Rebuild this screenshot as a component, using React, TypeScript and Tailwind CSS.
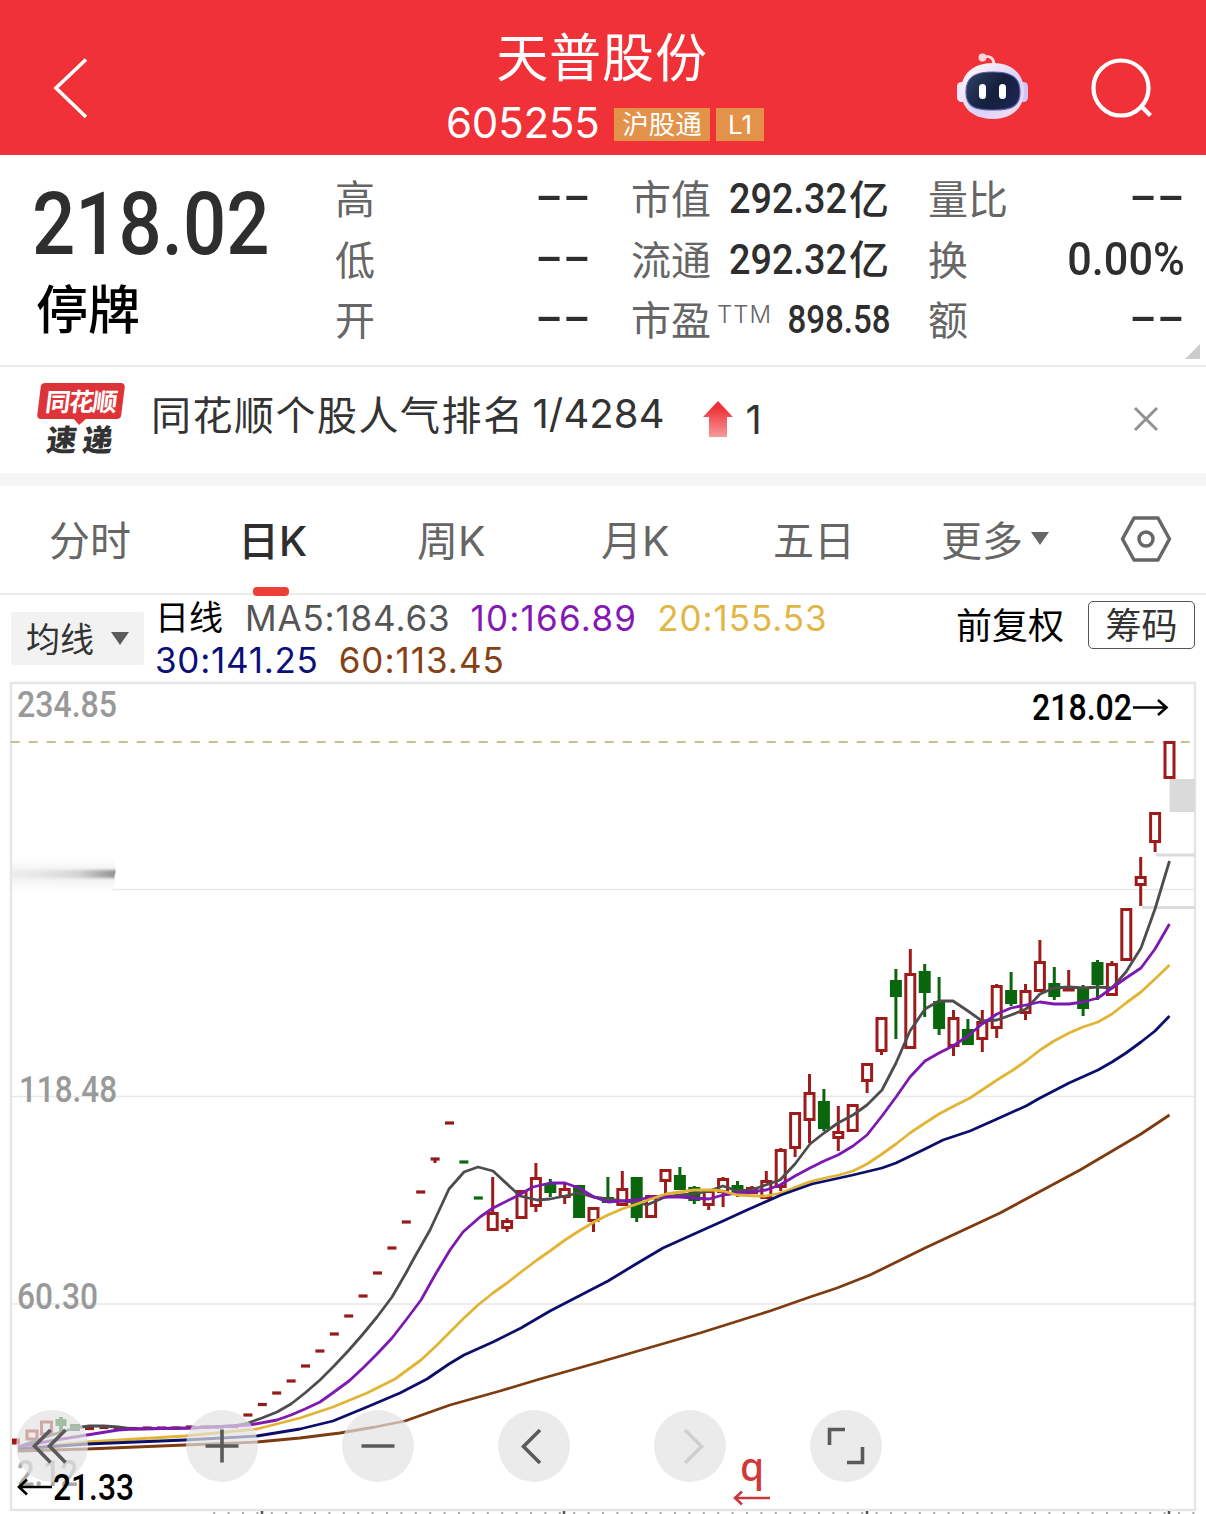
import clsx from "clsx";
import type { ReactNode } from "react";

const STEP = 14.4;
const LAST_X = 1169.5;

type Candle = [kind: "r" | "g", high: number, top: number, bottom: number, low: number];

/** Newest candle first, values are chart pixel rows. */
const candles: Candle[] = [
  ["r", 741, 741, 779, 779],
  ["r", 812, 812, 843, 852],
  ["r", 857, 876, 886, 906],
  ["r", 908, 908, 961, 961],
  ["r", 961, 963, 996, 996],
  ["g", 960, 962, 985, 1000],
  ["g", 985, 987, 1009, 1016],
  ["r", 970, 988, 991, 991],
  ["g", 967, 983, 997, 1000],
  ["r", 940, 961, 992, 992],
  ["r", 984, 990, 1014, 1020],
  ["g", 972, 990, 1004, 1006],
  ["r", 984, 985, 1029, 1038],
  ["r", 1010, 1021, 1040, 1052],
  ["g", 1019, 1029, 1045, 1045],
  ["r", 1010, 1017, 1047, 1056],
  ["g", 977, 1001, 1029, 1035],
  ["g", 964, 971, 993, 1017],
  ["r", 949, 973, 1049, 1049],
  ["g", 969, 980, 997, 1039],
  ["r", 1017, 1017, 1052, 1055],
  ["r", 1063, 1063, 1082, 1093],
  ["r", 1104, 1104, 1132, 1132],
  ["r", 1106, 1131, 1139, 1151],
  ["g", 1089, 1101, 1129, 1131],
  ["r", 1074, 1092, 1121, 1143],
  ["r", 1112, 1112, 1149, 1157],
  ["r", 1148, 1149, 1188, 1191],
  ["r", 1171, 1180, 1199, 1199],
  ["r", 1186, 1187, 1194, 1194],
  ["g", 1181, 1185, 1192, 1197],
  ["r", 1177, 1178, 1193, 1207],
  ["r", 1190, 1190, 1206, 1210],
  ["g", 1186, 1187, 1201, 1204],
  ["g", 1167, 1175, 1190, 1190],
  ["r", 1169, 1169, 1182, 1197],
  ["r", 1195, 1195, 1218, 1218],
  ["g", 1177, 1177, 1218, 1222],
  ["r", 1171, 1188, 1206, 1206],
  ["g", 1177, 1197, 1203, 1203],
  ["r", 1207, 1207, 1222, 1232],
  ["g", 1185, 1185, 1218, 1218],
  ["r", 1183, 1188, 1198, 1204],
  ["g", 1179, 1183, 1193, 1197],
  ["r", 1163, 1177, 1207, 1212],
  ["r", 1190, 1190, 1219, 1219],
  ["r", 1218, 1220, 1229, 1232],
  ["r", 1177, 1212, 1231, 1231],
];

/** One-price limit days, right to left. */
const limitDays = [
  1198, 1162, 1123, 1159, 1192, 1222, 1248, 1273, 1296, 1316, 1334, 1351, 1366, 1381, 1393, 1404.5, 1415,
  1426.5, 1427, 1427, 1427, 1428, 1428, 1428, 1428.5, 1428, 1427.5, 1428.5,
];

const averages = [
  {
    color: "#4d4d4d",
    points:
      "18,1447 32,1442 46,1437 61,1432 75,1428 89,1426 104,1426 118,1427 133,1429 190,1428 233,1426 248,1423 262,1418 277,1412 291,1404 305,1393 320,1380 334,1366 349,1350 363,1334 377,1317 392,1297 406,1273 413,1260 430,1230 449,1189 464,1172 478,1167 493,1171 520,1196 537,1200 550,1199 565,1196 579,1193 593,1197 608,1199 622,1201 637,1202 647,1205 665,1197 680,1195 694,1194 709,1191 723,1186 737,1191 752,1190 760,1187 780,1180 795,1164 810,1144 824,1133 838,1123 853,1115 867,1105 882,1090 896,1063 910,1031 925,1009 939,1001 953,1001 968,1011 982,1021 997,1020 1011,1015 1026,1009 1040,994 1054,988 1069,987 1083,988 1098,987 1112,988 1126,972 1141,948 1155,909 1169.5,861",
  },
  {
    color: "#7d18b0",
    points:
      "18,1447 50,1441 87,1435 118,1430 133,1429 190,1428 250,1425 277,1420 291,1415 305,1409 320,1402 334,1392 349,1381 363,1368 377,1354 392,1338 406,1320 421,1300 435,1275 450,1250 463,1232 480,1217 493,1208 517,1196 533,1187 550,1183 565,1183 579,1188 594,1197 608,1202 620,1201 637,1200 651,1197 666,1197 680,1197 694,1198 709,1199 723,1195 737,1193 751,1192 766,1190 780,1185 795,1176 810,1168 824,1161 838,1155 853,1146 867,1135 882,1116 896,1097 910,1077 925,1061 939,1053 953,1046 968,1036 982,1024 997,1014 1011,1008 1026,1005 1040,1002 1054,1004 1069,1004 1083,1002 1098,998 1112,988 1126,978 1141,968 1155,949 1169.5,924",
  },
  {
    color: "#e2b435",
    points:
      "18,1449 87,1442 185,1436 257,1429 300,1418 333,1407 367,1393 395,1379 421,1360 435,1347 449,1333 464,1318 478,1305 493,1293 507,1283 521,1272 537,1260 550,1251 565,1240 579,1231 594,1222 608,1215 622,1209 637,1204 651,1199 666,1194 680,1192 694,1190 713,1190 723,1191 737,1195 757,1196 766,1196 781,1193 796,1187 809,1182 825,1178 839,1175 853,1171 867,1164 882,1154 896,1144 910,1133 925,1123 939,1114 954,1106 970,1098 997,1080 1013,1070 1026,1061 1040,1050 1054,1041 1069,1033 1083,1027 1098,1022 1112,1014 1126,1003 1141,992 1155,979 1169.5,965",
  },
  {
    color: "#0b0f6b",
    points:
      "18,1449 87,1444 185,1440 257,1436 300,1429 333,1421 367,1407 400,1393 427,1379 449,1364 464,1355 493,1342 521,1328 550,1311 579,1296 608,1281 636,1264 663,1248 694,1234 723,1221 747,1210 781,1195 812,1184 853,1175 882,1168 896,1163 925,1149 943,1140 970,1131 997,1119 1026,1106 1040,1098 1069,1083 1098,1070 1112,1062 1126,1053 1141,1042 1155,1031 1169.5,1016",
  },
  {
    color: "#7e3b10",
    points:
      "18,1451 87,1449 185,1445 257,1442 300,1438 340,1433 375,1427 405,1421 450,1405 500,1391 540,1379 600,1362 700,1333 770,1311 810,1297 837,1288 870,1275 925,1248 1000,1213 1080,1170 1141,1134 1169.5,1115",
  },
];

const tabs = [
  { label: "分时", className: "ml-[49px] w-[189px]" },
  { label: "日K", className: "w-[179px]", active: true },
  { label: "周K", className: "w-[184px]" },
  { label: "月K", className: "w-[172px]" },
  { label: "五日", className: "w-[168px]" },
];

function Num({ className, children }: { className?: string; children: ReactNode }) {
  return <span className={clsx("inline-block whitespace-nowrap font-[Roboto] font-medium", className)}>{children}</span>;
}

function Dashes() {
  return (
    <span className="inline-block origin-right -translate-y-[2px] scale-x-[1.6] font-[Inter] text-[40px] font-semibold tracking-[-1.300px]">
      --
    </span>
  );
}

function Stat({ label, children }: { label: ReactNode; children: ReactNode }) {
  return (
    <div className="flex h-[60.5px] items-center justify-between text-[40px] leading-[60px] whitespace-nowrap">
      <span className="-mt-[2px] h-[60px] text-[#666]">{label}</span>
      <span className="flex items-center text-[#2e2e2e]">{children}</span>
    </div>
  );
}

function Robot() {
  return (
    <svg className="h-[70px] w-[74px]" viewBox="0 0 74 70" fill="none">
      <defs>
        <linearGradient id="shell" x1="15" y1="14" x2="60" y2="68" gradientUnits="userSpaceOnUse">
          <stop stopColor="#fff4f8" />
          <stop offset=".55" stopColor="#d9d3fb" />
          <stop offset="1" stopColor="#f6dcee" />
        </linearGradient>
        <linearGradient id="visor" x1="14" y1="26" x2="60" y2="58" gradientUnits="userSpaceOnUse">
          <stop stopColor="#2b3a5c" />
          <stop offset=".5" stopColor="#151f3d" />
          <stop offset="1" stopColor="#1d2656" />
        </linearGradient>
      </defs>
      <path d="M28 4.500c6-1 10 2 10 8" stroke="#fbd9df" strokeWidth="2.800" />
      <circle cx="26.500" cy="5.500" r="4" fill="#fcd5da" />
      <rect x="1" y="30" width="9" height="20" rx="4.500" fill="#efe4fb" />
      <rect x="63" y="30" width="9" height="20" rx="4.500" fill="#cfc5f6" />
      <path d="M37 11c20 0 31 12 31 28S57 67 37 67 5 56 5 39s12-28 32-28z" fill="url(#shell)" />
      <path
        d="M37 20c18 0 27 5 27 20S55 58 37 58 10 55 10 40s9-20 27-20z"
        fill="url(#visor)"
        stroke="#5a5fa8"
        strokeWidth="1.200"
      />
      <rect x="23" y="32" width="7" height="15" rx="3.500" fill="#fff" />
      <rect x="43" y="32" width="7" height="15" rx="3.500" fill="#fff" />
    </svg>
  );
}

function Header() {
  return (
    <header className="relative flex h-[155px] items-start justify-center bg-[#f03238] text-white">
      <svg className="absolute top-[56px] left-[50px] h-[64px] w-[40px]" viewBox="0 0 40 64" fill="none">
        <path d="M36 3.500 6 32l30 29" stroke="#fff" strokeWidth="3.600" />
      </svg>
      <div className="flex flex-col items-center">
        <h1 className="mt-[20px] mr-[2px] text-[52px] leading-[70px] font-normal tracking-[0.900px]">天普股份</h1>
        <div className="mt-[2px] flex items-center gap-[6px] pl-[4px]">
          <span className="mr-[8px] w-[154px] pt-px font-[Inter] text-[42px] leading-[60px] tracking-[-0.200px]">605255</span>
          <span className="mt-[3px] flex h-[33px] w-[96px] items-center justify-center bg-[#e3924a] text-[26.500px] leading-[33px]">
            <span className="-mt-[3px]">沪股通</span>
          </span>
          <span className="mt-[3px] flex h-[33px] w-[48px] items-center justify-center bg-[#e3924a] font-[Inter] text-[26px] leading-[33px]">
            L1
          </span>
        </div>
      </div>
      <div className="absolute top-[52px] left-[956px] flex">
        <Robot />
        <svg className="mt-px ml-[59px] h-[70px] w-[70px]" viewBox="0 0 70 70" fill="none" stroke="#fff" strokeWidth="4.200">
          <circle cx="32" cy="35" r="27.500" />
          <path d="M51 52 61.500 62.500" />
        </svg>
      </div>
    </header>
  );
}

function Quote() {
  return (
    <section className="relative flex h-[212px] border-b-2 border-[#ececec]">
      <div className="w-[335px] pl-[32px]">
        <div className="mt-[14px] h-[110px]">
          <Num className="origin-left scale-x-[0.875] text-[87px] leading-[110px] text-[#2e2e2e]">218.02</Num>
        </div>
        <div className="-mt-[2px] pl-[4px] text-[52px] leading-[60px] font-medium text-black">停牌</div>
      </div>
      <div className="grid w-[850px] grid-cols-[255px_256px_256px] content-start gap-x-[41px] pt-[13px]">
        <div>
          <Stat label="高"><Dashes /></Stat>
          <Stat label="低"><Dashes /></Stat>
          <Stat label="开"><Dashes /></Stat>
        </div>
        <div>
          <Stat label="市值">
            <Num className="origin-right translate-y-px scale-x-[0.900] text-[42px]">292.32</Num>
            <span className="-mt-[3px] -mr-[2px] ml-[2px] font-medium">亿</span>
          </Stat>
          <Stat label="流通">
            <Num className="origin-right translate-y-px scale-x-[0.900] text-[42px]">292.32</Num>
            <span className="-mt-[3px] -mr-[2px] ml-[2px] font-medium">亿</span>
          </Stat>
          <Stat
            label={
              <span className="flex h-[60px]">
                市盈
                <span className="-mt-[3px] ml-[6px] font-[Inter] text-[24px] font-light tracking-[1px]">TTM</span>
              </span>
            }
          >
            <Num className="mr-[5px] origin-right translate-y-px scale-x-[0.870] text-[38px]">898.58</Num>
          </Stat>
        </div>
        <div>
          <Stat label="量比"><Dashes /></Stat>
          <Stat label="换">
            <Num className="-mr-px origin-right scale-x-[0.920] text-[47px]">0.00%</Num>
          </Stat>
          <Stat label="额"><Dashes /></Stat>
        </div>
      </div>
      <svg className="absolute right-[6px] bottom-[6px] h-[15px] w-[15px]" viewBox="0 0 15 15">
        <path d="M15 0v15H0z" fill="#ccc" />
      </svg>
    </section>
  );
}

function NewsBar() {
  return (
    <section className="flex h-[119px] items-start border-b-[13px] border-[#f5f5f5] pl-[36px] text-[#333]">
      <div className="mt-[16px] h-[76px] w-[90px]">
        <div className="relative ml-[3px] flex h-[36px] w-[84px] -skew-x-[7deg] items-center justify-center rounded-[4px] bg-[#dd3439] text-[25px] leading-[36px] font-bold tracking-[-1.500px] text-white">
          <span className="-mt-[2px]">同花顺</span>
          <svg className="absolute top-[35px] left-[36px] h-[7px] w-[14px]" viewBox="0 0 14 7">
            <path d="M0 0h14L7 7z" fill="#dd3439" />
          </svg>
        </div>
        <div className="mt-0 ml-[11px] -skew-x-[7deg] text-[30px] leading-[38px] font-black tracking-[6px] whitespace-nowrap">
          速递
        </div>
      </div>
      <div className="mt-[14px] ml-[25px] flex items-center text-[40px] leading-[62px] tracking-[1.500px] whitespace-nowrap">
        同花顺个股人气排名
        <span className="ml-[8px] pt-[2px] font-[Inter] text-[40px] tracking-[0.100px]">1/4284</span>
      </div>
      <svg className="mt-[34px] ml-[37px] h-[37px] w-[32px]" viewBox="0 0 32 37">
        <defs>
          <linearGradient id="up" x1="0" y1="0" x2="0" y2="1">
            <stop offset=".2" stopColor="#ee3338" />
            <stop offset="1" stopColor="#f79a9c" />
          </linearGradient>
        </defs>
        <path d="M16 0 31 16h-6v20H7V16H1z" fill="url(#up)" />
      </svg>
      <span className="mt-[23px] ml-[12px] font-[Inter] text-[40px] leading-[60px]">1</span>
      <svg className="mt-[39px] mr-[47px] ml-auto h-[26px] w-[26px]" viewBox="0 0 26 26" stroke="#929292" strokeWidth="3">
        <path d="M2 2l22 22M24 2 2 24" />
      </svg>
    </section>
  );
}

function Tabs() {
  return (
    <nav className="flex h-[109px] items-start border-b-2 border-[#ececec] pt-[22px] text-[41px] leading-[60px] whitespace-nowrap text-[#666]">
      {tabs.map((tab) => (
        <div key={tab.label} className={tab.className}>
          <button
            type="button"
            className={clsx("relative font-[Inter,'Noto_Sans_CJK_SC']", tab.active && "font-medium text-[#2e2e2e]")}
          >
            {tab.label}
            {tab.active && (
              <span className="absolute top-[76px] left-[15px] h-[9px] w-[36px] rounded-[4px] bg-[#ee3f36]" />
            )}
          </button>
        </div>
      ))}
      <button type="button" className="flex items-center">
        更多
        <svg className="mt-px ml-[8px] h-[13px] w-[18px]" viewBox="0 0 18 13">
          <path d="M0 0h18l-9 13z" fill="#666" />
        </svg>
      </button>
      <svg
        className="mt-[7px] ml-[70px] h-[48px] w-[54px]"
        viewBox="0 0 54 48"
        fill="none"
        stroke="#666"
        strokeWidth="3.500"
        strokeLinejoin="round"
      >
        <path d="M15 3h24l11.500 21L39 45H15L3.500 24z" />
        <circle cx="27" cy="24" r="7" />
      </svg>
    </nav>
  );
}

function Legend() {
  return (
    <section className="flex h-[87px] items-start text-[34px] leading-[42px] whitespace-nowrap">
      <button type="button" className="mt-[17px] ml-[11px] flex h-[53px] w-[133px] items-center rounded-[3px] bg-[#f2f2f2] pl-[15px] text-[#333]">
        <span className="-mt-[2px]">均线</span>
        <svg className="ml-[17px] h-[13px] w-[18px]" viewBox="0 0 18 13">
          <path d="M0 0h18l-9 13z" fill="#5c5c5c" />
        </svg>
      </button>
      <div className="mt-[2px] ml-[11px] w-[801px] font-[Inter] text-[35px]">
        <div className="flex h-[42px]">
          <span className="-mt-[2px] mr-[22px] font-['Noto_Sans_CJK_SC'] text-[34px] text-black">日线</span>
          <span className="mr-[20px] tracking-[0.850px] text-[#555]">MA5:184.63</span>
          <span className="mr-[20px] tracking-[1.250px] text-[#8517b5]">10:166.89</span>
          <span className="tracking-[0.950px] text-[#e2b646]">20:155.53</span>
        </div>
        <div className="flex h-[42px]">
          <span className="mr-[20px] tracking-[0.750px] text-[#0b0f78]">30:141.25</span>
          <span className="tracking-[1px] text-[#854013]">60:113.45</span>
        </div>
      </div>
      <span className="mt-[7px] text-[36px] text-black">前复权</span>
      <button type="button" className="mt-[6px] ml-[24px] flex h-[48px] w-[107px] items-center justify-center rounded-[5px] border-[1.5px] border-[#555] text-[36px] text-[#333]">
        <span className="-mt-[4px]">筹码</span>
      </button>
    </section>
  );
}

function Chart() {
  return (
    <svg className="block h-[833px] w-[1206px]" viewBox="0 681 1206 833" fill="none">
      <defs>
        <linearGradient id="smear" x1="0" y1="0" x2="1" y2="0">
          <stop stopColor="#e8e8e8" stopOpacity=".3" />
          <stop offset=".65" stopColor="#d2d2d2" />
          <stop offset="1" stopColor="#909090" />
        </linearGradient>
        <linearGradient id="haze" x1="0" y1="0" x2="0" y2="1">
          <stop stopColor="#f4f4f4" stopOpacity="0" />
          <stop offset=".5" stopColor="#eee" />
          <stop offset="1" stopColor="#f4f4f4" stopOpacity="0" />
        </linearGradient>
        <filter id="soft" x="-10%" y="-60%" width="120%" height="220%">
          <feGaussianBlur stdDeviation=".6 1.800" />
        </filter>
      </defs>

      <path d="M112 889.500H1195M12 1096.500h1183M12 1304h1183" stroke="#e8e8e8" strokeWidth="1.500" />
      <rect x="11" y="683" width="1184" height="827" stroke="#e6e6e6" strokeWidth="2.500" />
      <rect x="12" y="856" width="103" height="38" fill="url(#haze)" />
      <path d="M12 870h104l-2 8H12z" fill="url(#smear)" filter="url(#soft)" />

      <rect x="1169.500" y="779" width="25.500" height="33" fill="#dadada" />
      <path d="M1156 855h39M1142 907.500h53" stroke="#dcdcdc" strokeWidth="3" />
      <path d="M10.700 742H1190" stroke="#c6c08c" strokeWidth="1.800" strokeDasharray="9 9" />

      {limitDays.map((y, i) => {
        const x = LAST_X - (candles.length + i) * STEP;
        return <path key={i} d={`M${x - 4.5} ${y}h9`} stroke={i < 2 ? "#0b690f" : "#951a1a"} strokeWidth="3.200" />;
      })}
      <path d="M435 1159v4" stroke="#951a1a" strokeWidth="3" />

      {/* oldest candles, left edge */}
      <path d="M12 1441.500h8" stroke="#a01515" strokeWidth="6" />
      <path d="M27 1431h10v8H27zM41.500 1422h10v12h-10z" stroke="#a01c1c" strokeWidth="3" />
      <path d="M55.500 1419h11v7h-11zM59 1417h4v15h-4zM70 1424h10v7H70z" fill="#0b690f" />

      {candles.map(([kind, high, top, bottom, low], i) => {
        const x = LAST_X - i * STEP;
        const red = kind === "r";
        return (
          <g key={i} stroke={red ? "#9e1b1b" : "#0a660d"} strokeWidth="3">
            {high < top && <path d={`M${x} ${high}V${top}`} />}
            {low > bottom && <path d={`M${x} ${bottom}V${low}`} />}
            <rect
              x={x - 4.5}
              y={top + 1.5}
              width="9"
              height={Math.max(bottom - top - 3, 0.5)}
              fill={red ? "none" : "#0a660d"}
            />
          </g>
        );
      })}

      {averages.map((line) => (
        <polyline key={line.color} points={line.points} stroke={line.color} strokeWidth="2.800" strokeLinejoin="round" />
      ))}

      <g fontFamily="Roboto" fontWeight="500" fontSize="36" fill="#999">
        <text x="17" y="717" textLength="100" lengthAdjust="spacingAndGlyphs">234.85</text>
        <text x="19" y="1102" textLength="98" lengthAdjust="spacingAndGlyphs">118.48</text>
        <text x="17" y="1309" textLength="81" lengthAdjust="spacingAndGlyphs">60.30</text>
        <text x="17" y="1486" textLength="61" lengthAdjust="spacingAndGlyphs" fill="#aaa">2.12</text>
      </g>
      <g fontFamily="Roboto" fontWeight="500" fontSize="36" fill="#000">
        <text x="1032" y="720" textLength="100" lengthAdjust="spacingAndGlyphs">218.02</text>
      </g>
      <path d="M1133 707.500h33M1158 700l8.500 7.500-8.500 7.500" stroke="#000" strokeWidth="2.600" />

      <path d="M213.200 1513H1195" stroke="#aaa" strokeWidth="2" strokeDasharray="2 12.400" />
      <path d="M262 1511v3M564 1511v3M867 1511v3M1169 1511v3" stroke="#555" strokeWidth="2.500" />
    </svg>
  );
}

function RoundButton({ className, faded, children }: { className?: string; faded?: boolean; children: ReactNode }) {
  return (
    <button
      type="button"
      className={clsx("flex size-[72px] items-center justify-center rounded-full bg-[#e3e3e3]/70", className)}
    >
      <svg
        className="size-[72px]"
        viewBox="0 0 72 72"
        fill="none"
        stroke={faded ? "#cfcfcf" : "#5a5a5a"}
        strokeWidth="3.600"
      >
        {children}
      </svg>
    </button>
  );
}

function Controls() {
  return (
    <div className="absolute top-[1410px] left-[16px] flex">
      <RoundButton className="mr-[98px]">
        <path d="M34.500 20 18.500 36l16 16.500M49.500 20l-16 16 16 16.500" />
      </RoundButton>
      <RoundButton className="mr-[84px]">
        <path d="M36 19.500v33M19.500 36h33" />
      </RoundButton>
      <RoundButton className="mr-[84px]">
        <path d="M19.500 36h33" />
      </RoundButton>
      <RoundButton className="mr-[84px]">
        <path d="M42 20 25.500 36.500 42 53" />
      </RoundButton>
      <RoundButton className="mr-[84px]" faded>
        <path d="M31 20l16.500 16.500L31 53" />
      </RoundButton>
      <RoundButton>
        <path d="M19.500 35V19.500H35M37 52.500h15.500V37" />
      </RoundButton>
    </div>
  );
}

export default function App() {
  return (
    <div className="relative h-[1514px] w-[1206px] overflow-hidden bg-white font-['Noto_Sans_CJK_SC',sans-serif]">
      <Header />
      <Quote />
      <NewsBar />
      <Tabs />
      <Legend />
      <div className="-mt-px">
        <Chart />
      </div>
      <Controls />

      {/* lowest price marker and rights-issue flag sit above the control row */}
      <svg className="absolute top-[1450px] left-[12px] h-[60px] w-[130px] overflow-visible" viewBox="0 0 130 60" fill="none">
        <path d="M7 37h33M15 29.500 7 37l8 7.500" stroke="#000" strokeWidth="2.600" />
        <text x="41" y="50" textLength="81" lengthAdjust="spacingAndGlyphs" fontFamily="Roboto" fontWeight="500" fontSize="36" fill="#000">
          21.33
        </text>
      </svg>
      <svg className="absolute top-[1450px] left-[730px] h-[56px] w-[44px] overflow-visible" viewBox="0 0 44 56" fill="none">
        <text x="10" y="31" fontFamily="Noto Sans" fontWeight="500" fontSize="39" fill="#d2383b">q</text>
        <path d="M5 48h35M12 41.500 5 48l7 6.500" stroke="#c9393c" strokeWidth="2.600" />
      </svg>
    </div>
  );
}
